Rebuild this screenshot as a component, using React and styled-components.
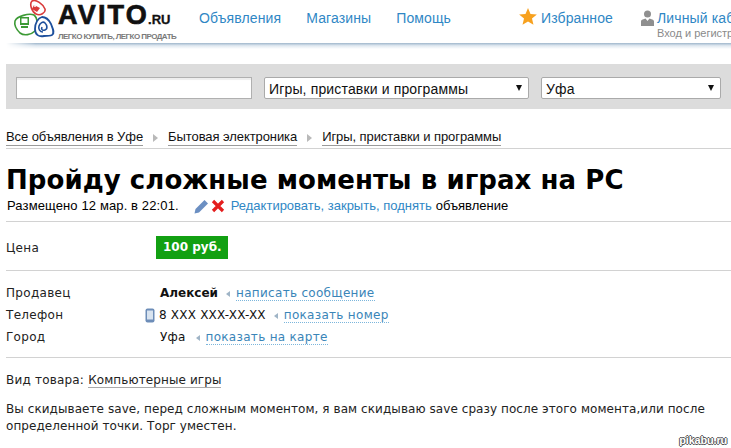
import React from "react";
import styled, { createGlobalStyle } from "styled-components";

const Global = createGlobalStyle`
  html, body { margin: 0; padding: 0; background: #fff; overflow: hidden; }
  body { width: 731px; height: 448px; font-family: "Liberation Sans", Arial, sans-serif; color: #000; }
`;
const Page = styled.div`width: 731px; height: 448px; overflow: hidden; position: relative;`;
const Header = styled.header`
  height: 44px; display: flex; align-items: flex-start; white-space: nowrap; margin-left: 6px; background: #fff;
`;
const HeaderEdge = styled.div`
  height: 6px; margin: -1px 0 0 6px;
  background: linear-gradient(#9fb6cc, #dfe8f0 45%, #fff);
  -webkit-mask-image: linear-gradient(90deg, transparent, #000 30px);
  mask-image: linear-gradient(90deg, transparent, #000 30px);
`;
const Logo = styled.div`width: 187px; height: 44px; display: flex; flex: none; margin-left: 6px;`;
const LogoText = styled.div`display: flex; flex-direction: column; margin-left: 2px; padding-top: 2px;`;
const Brand = styled.div`font-size: 27px; line-height: 27px; font-weight: 700; letter-spacing: 2.200px; color: #111; -webkit-text-stroke: .7px #111; display: flex; align-items: baseline;`;
const BrandRu = styled.span`font-size: 13px; letter-spacing: 0; margin-left: -1px; -webkit-text-stroke: .3px #111;`;
const Slogan = styled.div`font-size: 8px; line-height: 9px; font-weight: 700; color: #7a7a7a; margin-top: -1px; letter-spacing: -.55px;`;
const Nav = styled.nav`display: flex; gap: 25px; padding-top: 10px; flex: none; width: 320px;`;
const NavLink = styled.a`font-size: 14px; line-height: 16px; color: #2f87c5; letter-spacing: .12px;`;
const FavLink = styled(NavLink)`margin-top: 2px;`;
const Fav = styled.div`display: flex; gap: 4px; padding-top: 8px; flex: none; margin-right: 28px; align-items: flex-start;`;
const Account = styled.div`display: flex; gap: 2px; padding-top: 10px; flex: none;`;
const AccountCol = styled.div`display: flex; flex-direction: column;`;
const AccountSub = styled.span`font-size: 11px; line-height: 12px; color: #8a8a8a; margin-top: 1px;`;
const Search = styled.div`
  margin: 15px 0 0 6px; height: 45px; background: #dcdcdc; display: flex; align-items: center; gap: 12px; padding: 3px 10px 0; box-sizing: border-box;
`;
const Input = styled.div`width: 234px; height: 20px; background: #fff; border: 1px solid #b0b0b0; box-shadow: inset 0 2px 1px #eee; flex: none;`;
const Select = styled.div`
  width: ${p => p.$w}px; height: 20px; background: #fff; border: 1px solid #aaa; border-radius: 2px; flex: none;
  display: flex; align-items: center; justify-content: space-between; padding: 1px 4px 0; box-sizing: content-box; height: 19px; font-size: 14px; letter-spacing: .15px; color: #111;
`;
const Caret = styled.span`width: 0; height: 0; border-left: 3.500px solid transparent; border-right: 3.500px solid transparent; border-top: 6px solid #111; margin: -1px 2px 0 0;`;
const Crumbs = styled.div`
  margin: 20px 0 0 6px; display: flex; align-items: center; font-size: 13px; line-height: 14px; letter-spacing: -.08px; color: #111; height: 17px;
`;
const Crumb = styled.a`border-bottom: 1px solid #9a9a9a; padding-bottom: 1px;`;
const CrumbArrow = styled.span`width: 0; height: 0; border-left: 5px solid #b9b9b9; border-top: 4.500px solid transparent; border-bottom: 4.500px solid transparent; margin: 0 10px;`;
const Title = styled.h1`
  margin: 16px 0 0 6px; font: 700 26px/30px "DejaVu Sans", Verdana, sans-serif; letter-spacing: .06px; color: #000; white-space: nowrap;
`;
const Meta = styled.div`margin: 3px 0 0 7px; display: flex; align-items: center; font-size: 13px; line-height: 16px; height: 16px; white-space: nowrap;`;
const MetaDate = styled.span`letter-spacing: .12px;`;
const MetaIcons = styled.span`display: flex; align-items: center; gap: 2px; margin: 0 6px 0 15px;`;
const MetaLink = styled.a`color: #2f87c5; margin-right: 4px;`;
const Rule = styled.hr`margin: ${p => p.$mt || 0}px 0 0 6px; height: 1px; border: 0; background: #d2d2d2;`;
const PriceRow = styled.div`display: flex; align-items: center; margin: 0 0 0 6px; height: 48px; padding-top: 3px; box-sizing: border-box;`;
const Label = styled.div`width: ${p => p.$w || 150}px; flex: none; font: 12px/16px "DejaVu Sans", Verdana, sans-serif; letter-spacing: .3px; color: #222;`;
const Price = styled.div`background: #12a012; color: #fff; font: 700 12px/23px "DejaVu Sans", Verdana, sans-serif; height: 23px; padding: 0 6px 0 7px;`;
const Rows = styled.div`padding: 14px 0 12px 6px; display: flex; flex-direction: column; gap: 6px;`;
const Row = styled.div`display: flex; align-items: center; height: 16px; font: 12px/16px "DejaVu Sans", Verdana, sans-serif; white-space: nowrap; color: #111;`;
const Value = styled.span`margin-left: ${p => p.$ml || 0}px; font-weight: ${p => p.$bold ? 700 : 400}; letter-spacing: ${p => p.$bold ? 0 : .2}px;`;
const LeftArrow = styled.span`width: 0; height: 0; border-right: 4px solid #9fb4c6; border-top: 3px solid transparent; border-bottom: 3px solid transparent; margin: 1px 6px 0 ${p => p.$ml || 8}px;`;
const DotLink = styled.a`color: #3a85b8; border-bottom: 1px dotted #7cb6dc; line-height: 14px; letter-spacing: .3px;`;
const Para = styled.p`margin: ${p => p.$mt}px 0 0 6px; font: 12px/17px "DejaVu Sans", Verdana, sans-serif; letter-spacing: ${p => p.$ls || .07}px; color: #222; width: 725px; white-space: nowrap;`;
const KindLink = styled.a`border-bottom: 1px solid #aaa; color: #222; letter-spacing: .1px;`;
const Watermark = styled.div`
  position: absolute; right: 4px; bottom: 2px; font: 700 11px "Liberation Sans", sans-serif; color: #fff; letter-spacing: -.2px;
  text-shadow: 1px 0 #555, -1px 0 #555, 0 1px #555, 0 -1px #555;
`;

const LogoMark = () => (
  <svg width="44" height="38" viewBox="0 0 44 38" fill="none">
    <path d="M20 1C24-1 31 4 33 9c1 4-5 7-9 5-4-2-7-10-4-13z" stroke="#d93a3a" strokeWidth="1.600" fill="#fff" />
    <path d="M22 5l6 3-3 4-5-3z" fill="#d93a3a" />
    <circle cx="23" cy="6" r="1" fill="#fff" />
    <path d="M3 21c2-5 14-8 19-6 4 3 4 12 1 16-4 4-11 5-15 2-4-4-6-8-5-12z" stroke="#3c9a35" strokeWidth="1.600" fill="#fff" />
    <rect x="8" y="17" width="9" height="8" fill="#3c9a35" />
    <rect x="9.500" y="18.500" width="6" height="4.500" fill="#fff" />
    <rect x="9" y="26" width="7" height="2" fill="#3c9a35" />
    <path d="M32 36c-5 1-9-1-9-7s3-11 7-12c4 0 7 3 9 7 2 5 4 9 1 11-2 1-5 1-8 1z" stroke="#1d4f9c" strokeWidth="1.800" fill="#fff" />
    <path d="M31 32c-3 0-5-3-4-6s4-5 6-3 3 6 0 7-4-1-3-3" stroke="#1d4f9c" strokeWidth="1.600" />
  </svg>
);
const Star = () => (
  <svg width="18" height="17" viewBox="0 0 24 23"><path d="M12 0l3.400 8 8.600.7-6.600 5.600 2 8.500L12 18.300l-7.400 4.500 2-8.500L0 8.700 8.600 8z" fill="#f7a11e" /></svg>
);
const User = () => (
  <svg width="14" height="16" viewBox="0 0 14 16"><circle cx="6.500" cy="4" r="3.500" fill="#8f8f8f" /><path d="M0 16v-4.500C0 9.500 3 9 4.500 8.500L6.500 11l2-2.500C10 9 13 9.500 13 11.500V16z" fill="#8f8f8f" /></svg>
);
const Pencil = () => (
  <svg width="15" height="15" viewBox="0 0 15 15"><path d="M10.500 1l3.500 3.500L5 13.500l-4.500 1 1-4.500z" fill="#6b8fc2" /></svg>
);
const Cross = () => (
  <svg width="14" height="14" viewBox="0 0 14 14"><path d="M2 2l10 10M12 2L2 12" stroke="#e41e1e" strokeWidth="3.200" /></svg>
);
const Phone = () => (
  <svg width="10" height="15" viewBox="0 0 10 15"><rect x=".5" y=".5" width="9" height="14" rx="2" fill="#6d8db8" /><rect x="2" y="2.500" width="6" height="9" fill="#d9e4f0" /></svg>
);

export default function App() {
  return (
    <Page>
      <Global />
      <Header>
        <Logo>
          <LogoMark />
          <LogoText>
            <Brand>AVITO<BrandRu>.RU</BrandRu></Brand>
            <Slogan>ЛЕГКО КУПИТЬ, ЛЕГКО ПРОДАТЬ</Slogan>
          </LogoText>
        </Logo>
        <Nav>
          <NavLink>Объявления</NavLink>
          <NavLink>Магазины</NavLink>
          <NavLink>Помощь</NavLink>
        </Nav>
        <Fav><Star /><FavLink>Избранное</FavLink></Fav>
        <Account>
          <User />
          <AccountCol>
            <NavLink>Личный кабинет</NavLink>
            <AccountSub>Вход и регистрация</AccountSub>
          </AccountCol>
        </Account>
      </Header>
      <HeaderEdge />
      <Search>
        <Input />
        <Select $w={255}>Игры, приставки и программы<Caret /></Select>
        <Select $w={170}>Уфа<Caret /></Select>
      </Search>
      <Crumbs>
        <Crumb>Все объявления в Уфе</Crumb>
        <CrumbArrow />
        <Crumb>Бытовая электроника</Crumb>
        <CrumbArrow />
        <Crumb>Игры, приставки и программы</Crumb>
      </Crumbs>
      <Rule $mt={2} />
      <Title>Пройду сложные моменты в играх на РС</Title>
      <Meta>
        <MetaDate>Размещено 12 мар. в 22:01.</MetaDate>
        <MetaIcons><Pencil /><Cross /></MetaIcons>
        <MetaLink>Редактировать, закрыть, поднять</MetaLink> объявление
      </Meta>
      <Rule $mt={7} />
      <PriceRow>
        <Label>Цена</Label>
        <Price>100 руб.</Price>
      </PriceRow>
      <Rule />
      <Rows>
        <Row>
          <Label $w={154}>Продавец</Label>
          <Value $bold>Алексей</Value>
          <LeftArrow /><DotLink>написать сообщение</DotLink>
        </Row>
        <Row>
          <Label $w={139}>Телефон</Label>
          <Phone />
          <Value $ml={4}>8 XXX XXX-XX-XX</Value>
          <LeftArrow /><DotLink>показать номер</DotLink>
        </Row>
        <Row>
          <Label $w={154}>Город</Label>
          <Value>Уфа</Value>
          <LeftArrow $ml={10} /><DotLink>показать на карте</DotLink>
        </Row>
      </Rows>
      <Rule />
      <Para $mt={14} $ls={.2}>Вид товара: <KindLink>Компьютерные игры</KindLink></Para>
      <Para $mt={12}>Вы скидываете save, перед сложным моментом, я вам скидываю save сразу после этого момента,или после<br />определенной точки. Торг уместен.</Para>
      <Watermark>pikabu.ru</Watermark>
    </Page>
  );
}
